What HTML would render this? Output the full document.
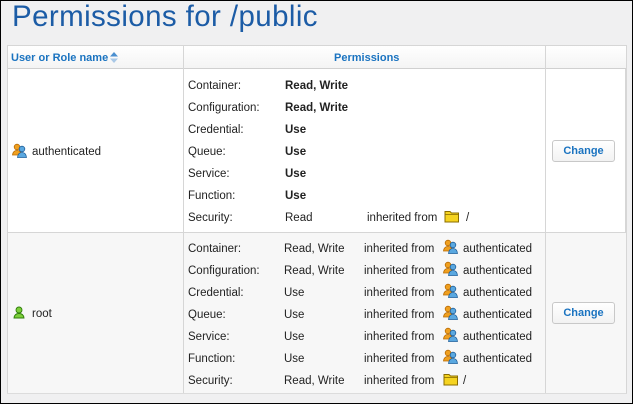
<!DOCTYPE html>
<html><head><meta charset="utf-8">
<style>
*{margin:0;padding:0;box-sizing:border-box}
body{width:633px;height:404px;overflow:hidden;font-family:"Liberation Sans",sans-serif;font-size:11.5px;color:#222;background:#fff}
#frame{position:absolute;left:0;top:0;width:633px;height:404px;border:1px solid #000;background:#f0f0f1}
h1{position:absolute;left:12px;top:0px;font-weight:normal;font-size:29.5px;color:#1c5ca6;letter-spacing:0.4px}
#tbl{position:absolute;left:7px;top:45px;width:620px;height:349px;background:#fff;border:1px solid #d6d6d6;border-right:2px solid #d6d6d6;border-bottom:2px solid #dcdcdc}
.hdr{position:absolute;left:0;top:0;width:618px;height:23px;background:linear-gradient(#fff,#f4f4f4);border-bottom:1px solid #d0d0d0}
.hl{position:absolute;top:6px;font-weight:bold;color:#1a73c0;font-size:11px}
.vl{position:absolute;top:0;width:1px;height:347px;background:#d6d6d6}
.r2{position:absolute;left:0;top:186px;width:618px;height:161px;background:#f7f7f7;border-top:1px solid #d6d6d6}
.t{position:absolute;white-space:nowrap;line-height:13px;margin-top:1px}
.b{font-weight:bold}
.btn{position:absolute;left:544px;width:63px;height:22px;border:1px solid #c8c8c8;border-radius:3px;background:linear-gradient(#fff,#f2f2f2);color:#1a73c0;font-weight:bold;text-align:center;line-height:20px;font-size:11px}
svg{position:absolute}
</style></head><body>
<div id="frame"></div>
<h1>Permissions for /public</h1>
<div id="tbl">
<div class="hdr"></div>
<div class="r2"></div>
<div class="vl" style="left:175px"></div>
<div class="vl" style="left:537px"></div>
<div class="hl" style="left:3px">User or Role name</div>
<svg style="left:102px;top:6px" width="8" height="11"><path d="M0 4.5L4 0L8 4.5Z" fill="#4a8fd0"/><path d="M0 6.5L4 11L8 6.5Z" fill="#a9c8e6"/></svg>
<div class="hl" style="left:326px">Permissions</div>
<div class="btn" style="top:94px">Change</div>
<div class="btn" style="top:256px">Change</div>
</div>

<svg width="0" height="0" style="position:absolute"><defs>
<g id="grp"><circle cx="5" cy="4" r="2.8" fill="#f0a020" stroke="#b86a00" stroke-width=".8"/><path d="M0.5 12 Q1 7.5 5 7.5 Q9 7.5 9.5 12Z" fill="#f0a020" stroke="#b86a00" stroke-width=".8"/><circle cx="10" cy="6" r="2.8" fill="#5aa8e0" stroke="#1f5f9a" stroke-width=".8"/><path d="M5.5 14.5 Q6 9.5 10 9.5 Q14 9.5 14.5 14.5Z" fill="#5aa8e0" stroke="#1f5f9a" stroke-width=".8"/></g>
<g id="fld"><path d="M1 3.5h5l1.5 1.5h7v9h-13.5z" fill="#f5d320" stroke="#8a6d00" stroke-width="1"/><path d="M1 6.5h13.5" stroke="#8a6d00" stroke-width=".8"/></g>
</defs></svg>

<svg style="left:12px;top:143px" width="16" height="16"><use href="#grp"/></svg>
<div class="t" style="left:32px;top:145px;font-size:11.5px">authenticated</div>
<svg style="left:13px;top:306px" width="12" height="13"><circle cx="6" cy="4" r="3" fill="#7ccf3a" stroke="#2f7d0a" stroke-width=".9"/><path d="M1 12 Q1.5 7.5 6 7.5 Q10.5 7.5 11 12Z" fill="#7ccf3a" stroke="#2f7d0a" stroke-width=".9"/></svg>
<div class="t" style="left:32px;top:307px;font-size:11.5px">root</div>

<div class="t" style="left:188px;top:79px">Container:</div><div class="t b" style="left:285px;top:79px">Read, Write</div>
<div class="t" style="left:188px;top:101px">Configuration:</div><div class="t b" style="left:285px;top:101px">Read, Write</div>
<div class="t" style="left:188px;top:123px">Credential:</div><div class="t b" style="left:285px;top:123px">Use</div>
<div class="t" style="left:188px;top:145px">Queue:</div><div class="t b" style="left:285px;top:145px">Use</div>
<div class="t" style="left:188px;top:167px">Service:</div><div class="t b" style="left:285px;top:167px">Use</div>
<div class="t" style="left:188px;top:189px">Function:</div><div class="t b" style="left:285px;top:189px">Use</div>
<div class="t" style="left:188px;top:211px">Security:</div><div class="t" style="left:285px;top:211px">Read</div>
<div class="t" style="left:367px;top:211px">inherited from</div>
<svg style="left:444px;top:208px" width="16" height="16"><use href="#fld"/></svg>
<div class="t" style="left:466px;top:211px">/</div>

<div class="t" style="left:188px;top:242px">Container:</div><div class="t" style="left:284px;top:242px">Read, Write</div>
<div class="t" style="left:188px;top:264px">Configuration:</div><div class="t" style="left:284px;top:264px">Read, Write</div>
<div class="t" style="left:188px;top:286px">Credential:</div><div class="t" style="left:284px;top:286px">Use</div>
<div class="t" style="left:188px;top:308px">Queue:</div><div class="t" style="left:284px;top:308px">Use</div>
<div class="t" style="left:188px;top:330px">Service:</div><div class="t" style="left:284px;top:330px">Use</div>
<div class="t" style="left:188px;top:352px">Function:</div><div class="t" style="left:284px;top:352px">Use</div>
<div class="t" style="left:188px;top:374px">Security:</div><div class="t" style="left:284px;top:374px">Read, Write</div>

<div class="t" style="left:364px;top:242px">inherited from</div><svg style="left:443px;top:239px" width="16" height="16"><use href="#grp"/></svg><div class="t" style="left:463px;top:242px">authenticated</div>
<div class="t" style="left:364px;top:264px">inherited from</div><svg style="left:443px;top:261px" width="16" height="16"><use href="#grp"/></svg><div class="t" style="left:463px;top:264px">authenticated</div>
<div class="t" style="left:364px;top:286px">inherited from</div><svg style="left:443px;top:283px" width="16" height="16"><use href="#grp"/></svg><div class="t" style="left:463px;top:286px">authenticated</div>
<div class="t" style="left:364px;top:308px">inherited from</div><svg style="left:443px;top:305px" width="16" height="16"><use href="#grp"/></svg><div class="t" style="left:463px;top:308px">authenticated</div>
<div class="t" style="left:364px;top:330px">inherited from</div><svg style="left:443px;top:327px" width="16" height="16"><use href="#grp"/></svg><div class="t" style="left:463px;top:330px">authenticated</div>
<div class="t" style="left:364px;top:352px">inherited from</div><svg style="left:443px;top:349px" width="16" height="16"><use href="#grp"/></svg><div class="t" style="left:463px;top:352px">authenticated</div>
<div class="t" style="left:364px;top:374px">inherited from</div><svg style="left:443px;top:371px" width="16" height="16"><use href="#fld"/></svg><div class="t" style="left:463px;top:374px">/</div>
</body></html>
